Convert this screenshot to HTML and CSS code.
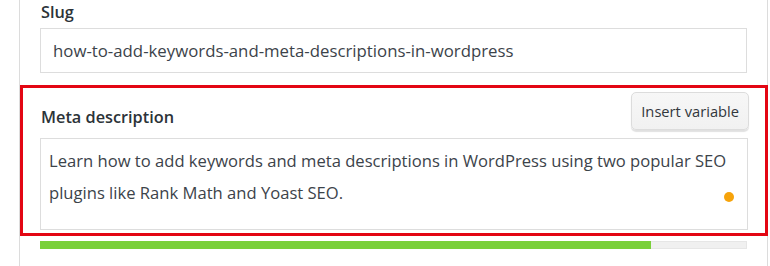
FILE: index.html
```html
<!DOCTYPE html>
<html lang="en">
<head>
<meta charset="utf-8">
<title>Meta description</title>
<link rel="stylesheet" href="styles.css">
</head>
<body>
<div class="panel">
  <div class="field slug-field">
    <label class="field-label">Slug</label>
    <div class="input">how-to-add-keywords-and-meta-descriptions-in-wordpress</div>
  </div>
  <div class="field meta-field">
    <div class="meta-head">
      <label class="field-label">Meta description</label>
      <button class="btn">Insert variable</button>
    </div>
    <div class="textarea">
      <p class="textarea-text">Learn how to add keywords and meta descriptions in WordPress using two popular SEO plugins like Rank Math and Yoast SEO.</p>
      <span class="dot"></span>
    </div>
  </div>
  <div class="progress"><div class="progress-fill" style="width: 86.6%"></div></div>
</div>
</body>
</html>
```

FILE: styles.css
```css
html, body {
  margin: 0;
  padding: 0;
  background: #ffffff;
}
body {
  font-family: "Open Sans", "Noto Sans", sans-serif;
  color: #3c434a;
}
.panel {
  margin-left: 19px;
  width: 747px;
  height: 266px;
  border-left: 1px solid #dcdcdc;
  border-right: 1px solid #dcdcdc;
  box-sizing: content-box;
}
.slug-field {
  padding: 0 20px 0 20px;
}
.field-label {
  display: block;
  font-size: 16.3px;
  font-weight: 600;
  color: #2c3338;
  line-height: 22px;
}
.slug-field .field-label {
  padding-top: 1px;
  margin-left: 1px;
}
.input {
  margin-top: 5px;
  height: 43px;
  border: 1px solid #dddddd;
  box-sizing: content-box;
  padding: 0 12px;
  font-size: 16.8px;
  line-height: 43px;
  color: #3c434a;
  white-space: nowrap;
}
.meta-field {
  margin-top: 12px;
  margin-right: -1px;
  border: 3px solid #e30613;
  padding: 4px 17px 3px 17px;
}
.meta-head {
  display: flex;
  justify-content: space-between;
  align-items: flex-end;
}
.meta-head .field-label {
  margin-left: 1px;
  margin-bottom: 2px;
}
.btn {
  font-family: inherit;
  font-size: 14.7px;
  color: #32373c;
  height: 38px;
  padding: 0 9px;
  background: linear-gradient(#f7f7f7, #f1f1f1);
  border: 1px solid #dcdcdc;
  border-radius: 5px;
  box-shadow: 0 2px 1px rgba(0, 0, 0, 0.12);
  margin-right: -1px;
}
.textarea {
  position: relative;
  margin-top: 8px;
  height: 84px;
  border: 1px solid #dddddd;
  padding: 6px 8px 0 8px;
}
.textarea-text {
  margin: 0;
  font-size: 16.6px;
  line-height: 32px;
  color: #3c434a;
  padding-right: 12px;
}
.dot {
  position: absolute;
  right: 13px;
  top: 53px;
  width: 10px;
  height: 10px;
  border-radius: 50%;
  background: #f6a30b;
}
.progress {
  margin: 5px 20px 0 20px;
  height: 8px;
  background: #f0f0f0;
  border: 1px solid #e6e6e6;
  box-sizing: border-box;
  display: flex;
}
.progress-fill {
  background: #7ad03a;
  margin: -1px 0 -1px -1px;
}
```
